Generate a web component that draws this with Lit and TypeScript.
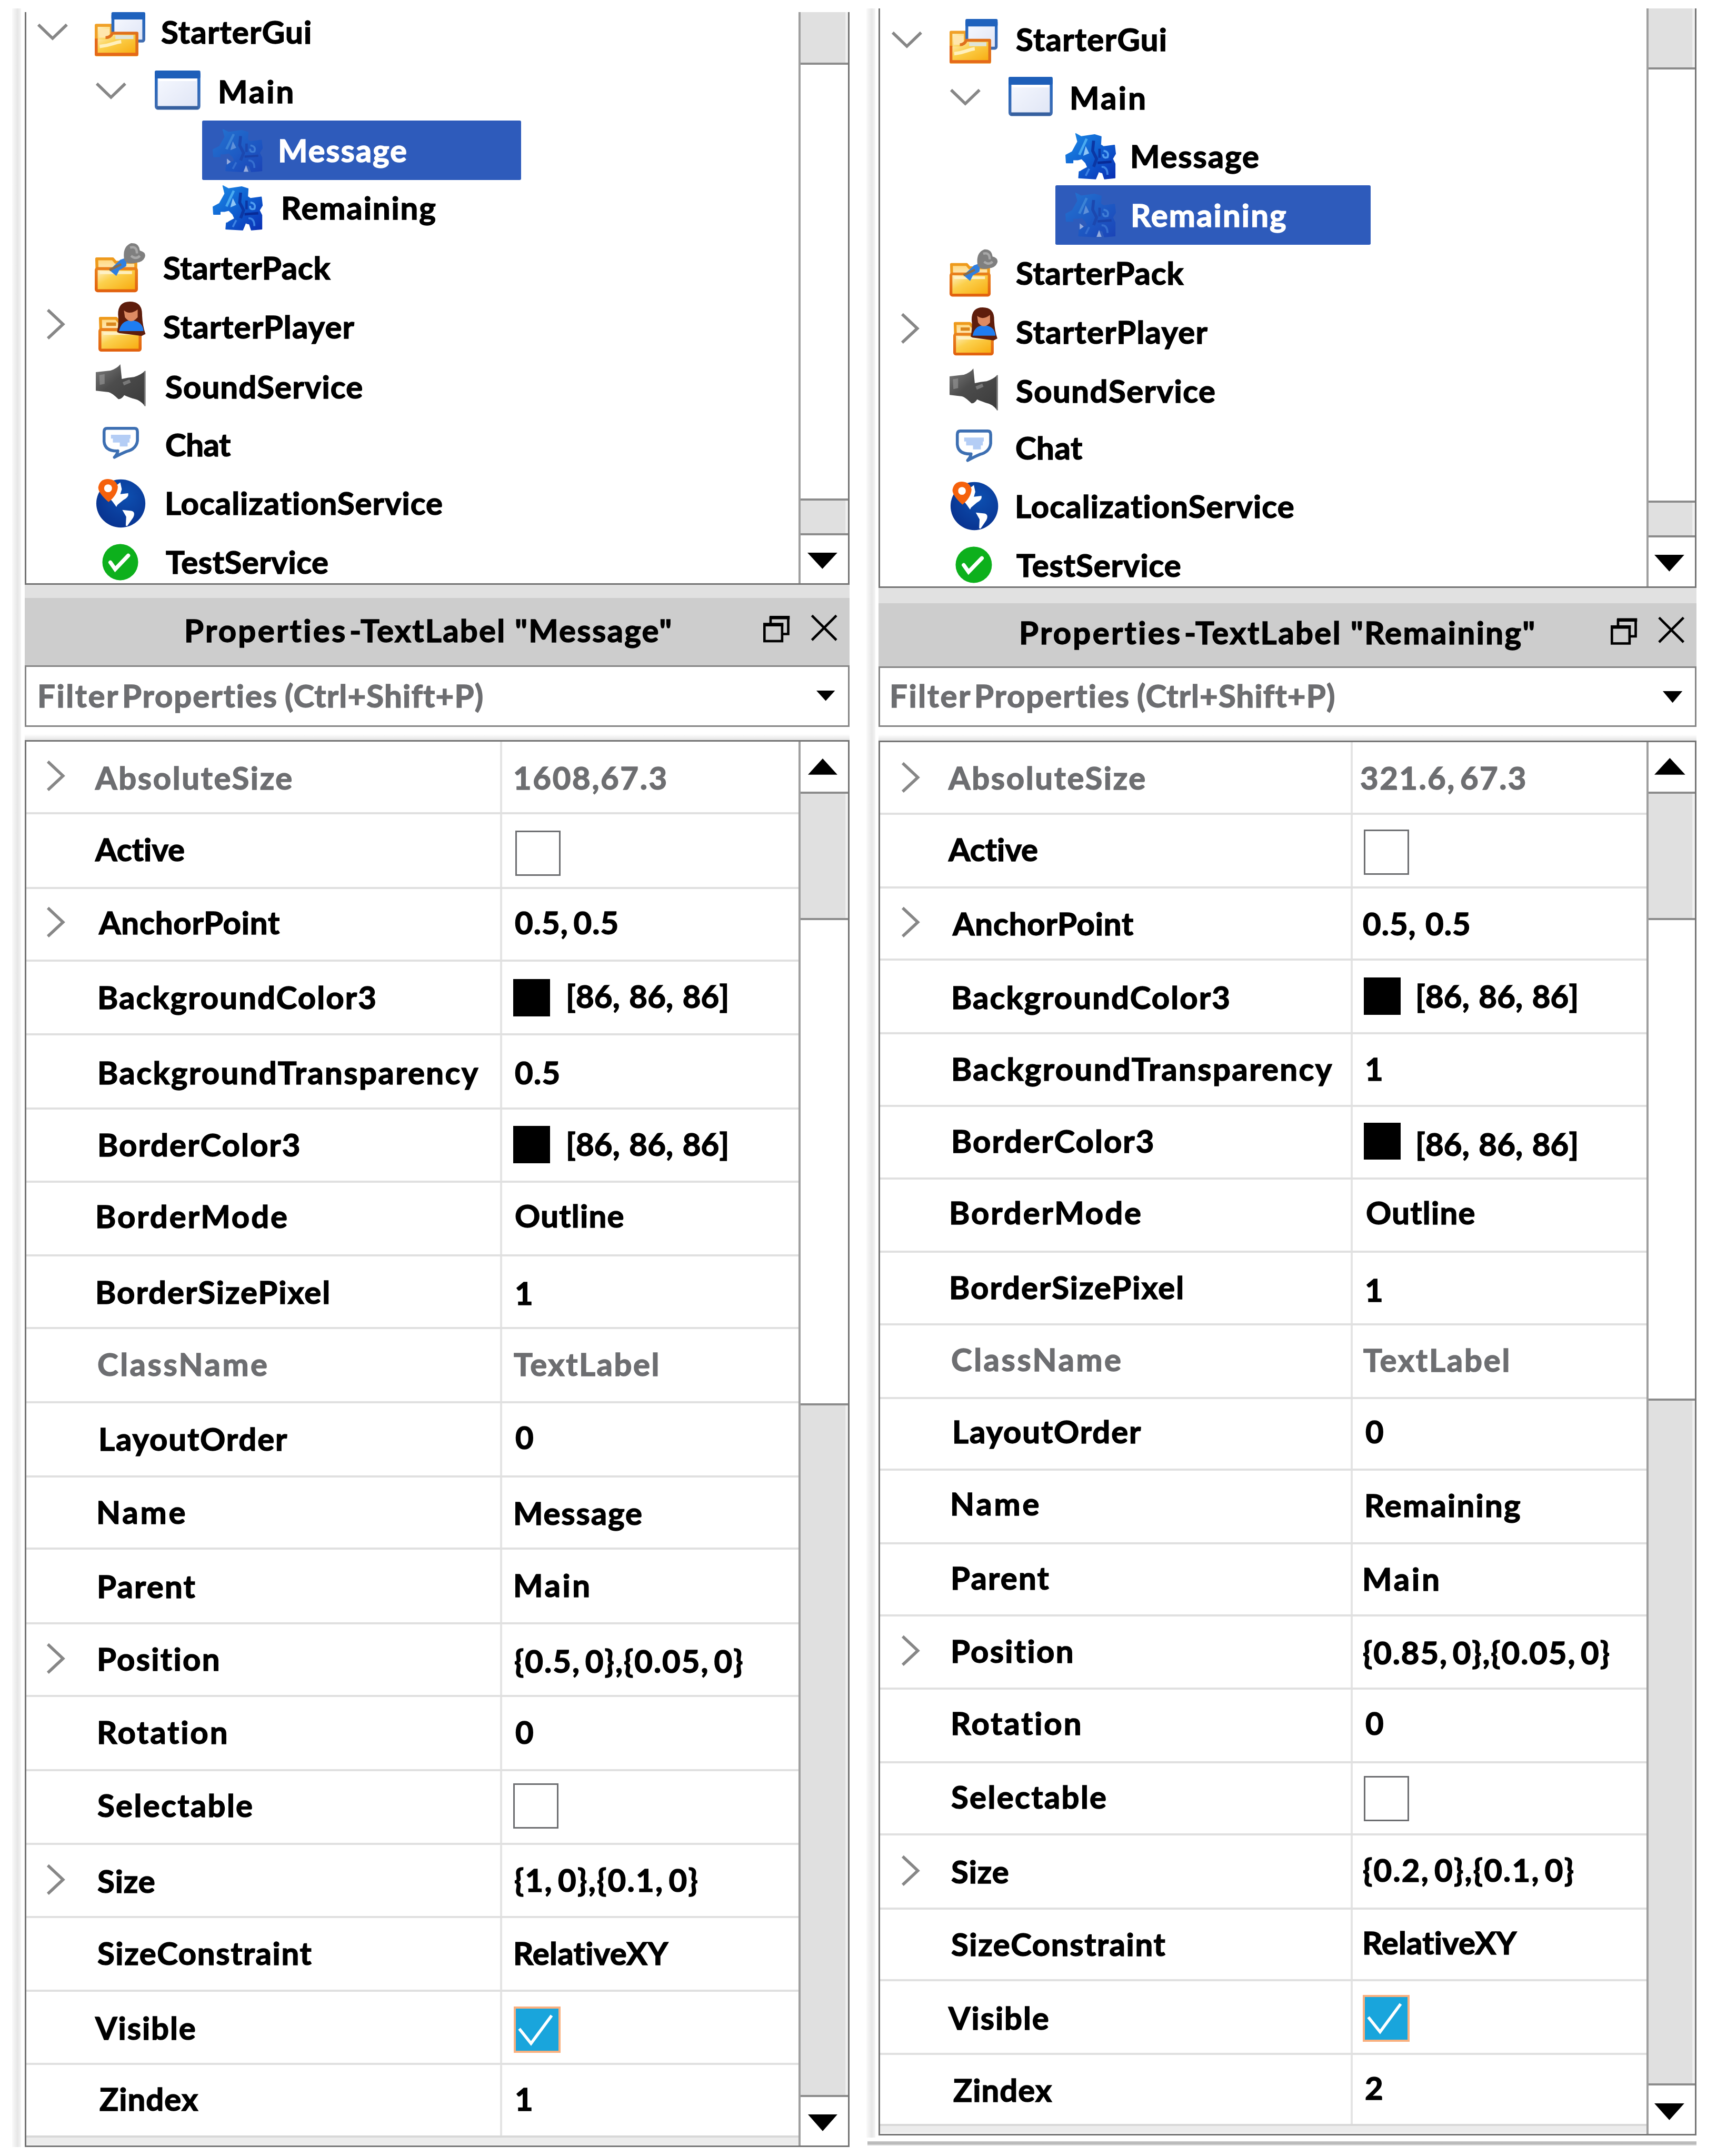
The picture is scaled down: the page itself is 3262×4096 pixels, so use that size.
import { LitElement, html, css, svg, nothing, TemplateResult } from "lit";
import { customElement, property } from "lit/decorators.js";
import { styleMap } from "lit/directives/style-map.js";
import { classMap } from "lit/directives/class-map.js";

const FONT_SIZE = 63;
const LINE = 80;
const BASELINE = 62.5;
const GLYPH_SCALE = 1.02;
const FONT_STACK = 'Lato, "Open Sans", "Liberation Sans", sans-serif';

const ctx = document.createElement("canvas").getContext("2d")!;

/** Text whose ink spans exactly `w` units, starting at its own left edge. */
function fitted(text: string, w: number, wordGap = 0) {
  ctx.font = `bold ${FONT_SIZE}px ${FONT_STACK}`;
  const m = ctx.measureText(text);
  const left = -m.actualBoundingBoxLeft;
  const ink = m.actualBoundingBoxRight - left;
  const spaces = text.split(" ").length - 1;
  const gaps = text.length - 1;
  const spacing = gaps > 0 ? (w / GLYPH_SCALE - ink - spaces * wordGap) / gaps : 0;
  return html`<span class="fit" style=${styleMap({ width: `${w}px` })}
    ><span
      class="glyphs"
      style=${styleMap({
        letterSpacing: `${spacing.toFixed(3)}px`,
        wordSpacing: `${wordGap}px`,
        marginLeft: `${(1.5 - left * GLYPH_SCALE).toFixed(2)}px`,
      })}
      >${text}</span
    ></span
  >`;
}

const shared = css`
  * {
    box-sizing: border-box;
  }
  .fit {
    display: block;
    height: ${LINE}px;
    flex: none;
    white-space: pre;
  }
  .glyphs {
    display: inline-block;
    line-height: ${LINE}px;
    transform: scaleX(${GLYPH_SCALE});
    transform-origin: 0 0;
    font-kerning: normal;
    font-variant-ligatures: none;
    -webkit-text-stroke: 1.6px currentColor;
  }
  svg {
    display: block;
    flex: none;
    overflow: visible;
  }
`;

/* ---------- icons ---------- */

type IconName = "gui" | "window" | "label" | "pack" | "player" | "sound" | "chat" | "globe" | "test";

const folder = (x: number, y: number, w: number, h: number) => svg`
  <path d="M${x + 4} ${y + 3} h${w * 0.38} l6 7 h${w * 0.5 - 2} v${h - 14} h${-(w - 8)} z"
    fill="url(#paper)" stroke="#ee9a1c" stroke-width="6" stroke-linejoin="round"/>`;
const flap = (x: number, y: number, w: number, h: number) => svg`
  <rect x=${x + 3} y=${y + 3} width=${w - 6} height=${h - 6} rx="3" fill="url(#flap)" stroke="url(#rim)" stroke-width="6"/>
  <path d="M${x + 10} ${y + 11} h${w - 22}" stroke="#fff4cf" stroke-width="6" opacity=".85"/>`;

const defs = svg`<defs>
  <linearGradient id="paper" x1="0" y1="0" x2="0" y2="1"><stop offset="0" stop-color="#ffd77c"/><stop offset=".5" stop-color="#fff0cd"/><stop offset="1" stop-color="#f6bd2c"/></linearGradient>
  <linearGradient id="flap" x1="0" y1="0" x2="1" y2="1"><stop offset="0" stop-color="#fff3cf"/><stop offset=".4" stop-color="#fbd04c"/><stop offset="1" stop-color="#f7a90c"/></linearGradient>
  <linearGradient id="rim" x1="0" y1="0" x2="0" y2="1"><stop offset="0" stop-color="#e9801b"/><stop offset="1" stop-color="#e2620f"/></linearGradient>
  <linearGradient id="pane" x1="0" y1="0" x2="1" y2="1"><stop offset="0" stop-color="#f7f9ff"/><stop offset="1" stop-color="#dfe5f5"/></linearGradient>
  <linearGradient id="frame" x1="0" y1="0" x2="0" y2="1"><stop offset="0" stop-color="#1f66c4"/><stop offset="1" stop-color="#3f6cb0"/></linearGradient>
  <linearGradient id="ink" x1="0" y1="0" x2="1" y2="1"><stop offset="0" stop-color="#1c8be6"/><stop offset=".5" stop-color="#0f5fd0"/><stop offset="1" stop-color="#0a2fb4"/></linearGradient>
  <linearGradient id="metal" x1="0" y1="0" x2="1" y2="1"><stop offset="0" stop-color="#7d7d7d"/><stop offset=".4" stop-color="#4c4c4c"/><stop offset="1" stop-color="#3a3a3a"/></linearGradient>
  <radialGradient id="earth" cx=".6" cy=".35" r=".7"><stop offset="0" stop-color="#0d4fb0"/><stop offset="1" stop-color="#08328f"/></radialGradient>
</defs>`;

const art: Record<IconName, { box: string; body: TemplateResult }> = {
  gui: {
    box: "0 0 103 90",
    body: svg`<path d="M3 27 H34 V42 H86 V87 H3 Z" fill="url(#flap)" stroke="#f0a128" stroke-width="6" stroke-linejoin="round"/>
      <path d="M9 34 H30 V52 H9Z" fill="#ffe6ad"/>
      <rect x="37" y="4" width="63" height="55" rx="3" fill="url(#pane)" stroke="url(#frame)" stroke-width="6"/>
      <rect x="34" y="0" width="69" height="15" rx="3" fill="#1f62bd"/>
      <path d="M3 56 L20 56 Q30 56 36 44 H86 V87 H3 Z" fill="url(#flap)"/>
      <path d="M22 52 Q32 52 36 43 H86 V86" fill="none" stroke="#e0701c" stroke-width="6" stroke-linejoin="round"/>
      <path d="M3 54 V86 H88" fill="none" stroke="#e5691a" stroke-width="6" stroke-linejoin="round"/>
      <path d="M42 51 H79" stroke="#dfe4d8" stroke-width="8"/>
      <path d="M10 70 C34 68 38 62 54 60" stroke="#fff0bd" stroke-width="7" fill="none"/>`,
  },
  window: {
    box: "0 0 93 80",
    body: svg`<rect x="3" y="3" width="87" height="74" rx="4" fill="url(#pane)" stroke="url(#frame)" stroke-width="6"/>
      <rect x="0" y="0" width="93" height="16" rx="3" fill="#1e5fb9"/>
      <path d="M8 19 H85" stroke="#fff" stroke-width="5"/>
      <path d="M5 76 H88" stroke="#36609f" stroke-width="7"/>`,
  },
  label: {
    box: "0 0 100 90",
    body: svg`<path d="M20 0 L31 6 L58 2 L71 6 L70 22 L76 26 L98 23 L100 40 L94 50 L99 60 V88 L78 90 L74 78 L66 76 L60 90 L26 88 L27 76 L44 67 L40 58 L32 50 L24 52 L14 52 L14 58 L1 58 L0 43 L13 36 L24 16 Z"
        fill="url(#ink)" stroke="url(#ink)" stroke-width="2" stroke-linejoin="round"/>
      <path d="M42 10 L27 42" stroke="#49aaf0" stroke-width="5"/>
      <path d="M40 25 l7 14 -12 5z" fill="#8fc6f6"/>
      <path d="M56 14 L54 34 L62 50 L56 66" stroke="#0b37a4" stroke-width="6" fill="none"/>
      <path d="M68 30 V48" stroke="#0b37a4" stroke-width="5"/>
      <path d="M76 34 q12 2 8 13 q-9 3 -9 -6" stroke="#4f9df0" stroke-width="4" fill="none"/>
      <path d="M40 84 l7 -14 M72 66 q12 0 12 16" stroke="#3c82e4" stroke-width="4" fill="none"/>
      <path d="M64 58 L92 56" stroke="#082a96" stroke-width="5"/>
      <path d="M28 62 l8 7 -8 6z M62 90 l5 -14 5 14z" fill="#fff"/>`,
  },
  pack: {
    box: "0 0 103 101",
    body: svg`${folder(0, 30, 86, 66)}${flap(0, 50, 88, 51)}
      <path d="M30 56 L52 35 L66 30 L64 48 L50 56 L44 68 Z" fill="#2f7fe0"/>
      <path d="M30 56 L54 44" stroke="#8a6d4a" stroke-width="5"/>
      <path d="M60 34 Q56 8 74 1 Q90 0 92 16 Q106 20 102 30 Q98 40 84 41 Q66 46 60 34Z" fill="#7f7f7f"/>
      <path d="M72 10 q14 -4 14 12 M74 27 q10 8 18 0" fill="none" stroke="#a8a8a8" stroke-width="5"/>`,
  },
  player: {
    box: "0 0 96 102",
    body: svg`${folder(0, 31, 84, 66)}${flap(0, 54, 88, 48)}
      <path d="M38 62 Q42 44 40 26 Q40 0 64 0 Q90 0 89 28 Q90 50 96 66 L88 70 L42 64Z" fill="#5e1d0c"/>
      <path d="M42 60 Q46 40 64 38 Q90 38 92 60 Z" fill="#1f7df0"/>
      <path d="M52 18 Q64 28 80 16 L80 32 Q66 48 54 32Z" fill="#dd8a62"/>
      <path d="M16 46 H36" stroke="#d9861c" stroke-width="7"/>`,
  },
  sound: {
    box: "0 0 101 86",
    body: svg`<path d="M0 16 L30 13 Q44 8 50 0 L53 30 Q64 27 78 26 Q92 22 101 13 V86 Q90 72 76 70 Q64 66 58 63 Q52 72 46 71 Q32 58 26 57 L0 54 Z" fill="url(#metal)"/>
      <path d="M7 22 L18 20 V40 L8 42Z" fill="#9a9a9a" opacity=".6"/>
      <path d="M56 40 L70 34" stroke="#8d8d8d" stroke-width="7" opacity=".7"/>
      <path d="M100 14 V85" stroke="#777" stroke-width="3"/>`,
  },
  chat: {
    box: "0 0 75 65",
    body: svg`<path d="M10 3 H66 Q72 3 72 10 V28 Q70 45 50 50 Q40 54 25 62 Q32 54 32 49 Q6 50 4 30 V10 Q4 3 10 3Z" fill="#fff" stroke="#3d6fb2" stroke-width="6" stroke-linejoin="round"/>
      <path d="M18 20 H58 M22 28 H56 M36 36 H52" stroke="#b4cdf5" stroke-width="8"/>`,
  },
  globe: {
    box: "0 0 101 100",
    body: svg`<ellipse cx="51" cy="51" rx="50" ry="49" fill="url(#earth)"/>
      <path d="M42 14 L50 8 L53 22 L50 32 L66 30 Q68 38 56 44 L44 54 L42 58 L34 47 L28 40 Z" fill="#fff"/>
      <path d="M54 64 L72 66 Q82 68 76 80 L64 97 L61 96 L62 78 Z" fill="#fff"/>
      <path d="M26 48 Q5 30 5 18 Q8 1 25 1 Q42 2 45 17 Q44 34 26 48Z" fill="#f5610c"/>
      <circle cx="25" cy="20" r="8" fill="#fff"/>`,
  },
  test: {
    box: "0 0 75 75",
    body: svg`<circle cx="37.500" cy="37.500" r="37" fill="#0db01c"/>
      <path d="M17 38 L27 52 L54 24" fill="none" stroke="#fff" stroke-width="8" stroke-linecap="round"/>`,
  },
};

type Box = [x: number, y: number, w: number, h: number];

const icon = (name: IconName, w: number, h: number) =>
  html`<svg viewBox=${art[name].box} width=${w} height=${h} preserveAspectRatio="none">${defs}${art[name].body}</svg>`;

const chevron = (down: boolean) =>
  down
    ? html`<svg viewBox="0 0 62 34" width="62" height="34"><path d="M2 2 L31 30 L60 2" fill="none" stroke="#878787" stroke-width="6"/></svg>`
    : html`<svg viewBox="0 0 36 62" width="36" height="62"><path d="M2 2 L33 31 L2 60" fill="none" stroke="#878787" stroke-width="6"/></svg>`;

const triangle = (up: boolean, w: number, h: number) =>
  html`<svg viewBox="0 0 10 10" width=${w} height=${h} preserveAspectRatio="none"><path d=${up ? "M0 10 H10 L5 0Z" : "M0 0 H10 L5 10Z"} fill="#000"/></svg>`;

/* ---------- data ---------- */

interface TreeRow {
  base: number;
  text: string;
  x: number;
  w: number;
  icon: [IconName, ...Box];
  chev?: [x: number, y: number, down: boolean];
  selected?: [x: number, w: number];
}

type Cell = { text: string; x: number; w: number; base: number; gap?: number };
type Value =
  | { kind: "text"; cell: Cell }
  | { kind: "color"; swatch: Box; cell: Cell }
  | { kind: "check"; box: Box; on: boolean };

interface PropRow {
  end: number;
  label: Cell;
  value: Value;
  chevY?: number;
  dim?: boolean;
}

interface Segment {
  end: number;
  fill: "track" | "thumb";
  arrow?: { up: boolean; box: Box };
}

interface PanelData {
  left: number;
  right: number;
  top: number;
  treeEnd: number;
  headTop: number;
  headEnd: number;
  filterEnd: number;
  tableTop: number;
  tableEnd: number;
  divider: number;
  bar: number;
  title: Cell[];
  filter: Cell[];
  restore: Box;
  close: Box;
  caret: Box;
  chevX: number;
  tree: TreeRow[];
  treeBar: Segment[];
  props: PropRow[];
  tableBar: Segment[];
}

const labelSpans: [string, number, number][] = [
  ["AbsoluteSize", 192, 401],
  ["Active", 192, 183],
  ["AnchorPoint", 200, 370],
  ["BackgroundColor3", 203, 561],
  ["BackgroundTransparency", 203, 772],
  ["BorderColor3", 203, 406],
  ["BorderMode", 199, 385],
  ["BorderSizePixel", 199, 470],
  ["ClassName", 200, 343],
  ["LayoutOrder", 205, 380],
  ["Name", 201, 175],
  ["Parent", 202, 196],
  ["Position", 202, 243],
  ["Rotation", 202, 259],
  ["Selectable", 199, 314],
  ["Size", 199, 115],
  ["SizeConstraint", 199, 436],
  ["Visible", 192, 204],
  ["Zindex", 203, 200],
];

const t = (text: string, x: number, w: number, base: number, gap = 0): Value => ({ kind: "text", cell: { text, x, w, base, gap } });
const color = (swatch: Box, x: number, base: number): Value => ({
  kind: "color",
  swatch,
  cell: { text: "[86, 86, 86]", x, w: 323, base, gap: 3 },
});
const check = (box: Box, on = false): Value => ({ kind: "check", box, on });

function rows(shift: number, ends: number[], bases: number[], chevs: Record<number, number>, values: Value[]): PropRow[] {
  return labelSpans.map(([text, x, w], i) => ({
    end: ends[i] + 1.5,
    label: { text, x: x + shift, w, base: bases[i] },
    value: values[i],
    chevY: chevs[i],
    dim: text === "AbsoluteSize" || text === "ClassName",
  }));
}

const leftPanel: PanelData = {
  left: 50, right: 1732, top: 25, treeEnd: 1192, headTop: 1219, headEnd: 1356, filterEnd: 1482,
  tableTop: 1509, tableEnd: 4377, divider: 1021, bar: 1627,
  title: [
    { text: "Properties", x: 379, w: 323, base: 1308 },
    { text: '-TextLabel "Message"', x: 714, w: 651, base: 1308, gap: 0 },
  ],
  filter: [
    { text: "Filter", x: 81, w: 160, base: 1442 },
    { text: "Properties", x: 253, w: 310, base: 1442 },
    { text: "(Ctrl+Shift+P)", x: 582, w: 399, base: 1442 },
  ],
  restore: [1556, 1255, 54, 54], close: [1654, 1253, 53, 53], caret: [1665, 1409, 38, 21],
  chevX: 96,
  tree: [
    { base: 88, text: "StarterGui", x: 329, w: 303, icon: ["gui", 194, 25, 103, 90], chev: [77, 48, true] },
    { base: 209, text: "Main", x: 449, w: 146, icon: ["window", 316, 144, 93, 80], chev: [196, 169, true] },
    { base: 329, text: "Message", x: 571, w: 256, icon: ["label", 435, 263, 100, 86], selected: [413, 650] },
    { base: 447, text: "Remaining", x: 577, w: 310, icon: ["label", 435, 379, 100, 90] },
    { base: 569, text: "StarterPack", x: 333, w: 340, icon: ["pack", 194, 495, 103, 101] },
    { base: 689, text: "StarterPlayer", x: 333, w: 389, icon: ["player", 201, 615, 96, 102], chev: [96, 630, false] },
    { base: 811, text: "SoundService", x: 337, w: 400, icon: ["sound", 196, 743, 101, 86] },
    { base: 929, text: "Chat", x: 338, w: 132, icon: ["chat", 209, 870, 75, 65] },
    { base: 1049, text: "LocalizationService", x: 340, w: 561, icon: ["globe", 196, 975, 101, 100] },
    { base: 1169, text: "TestService", x: 337, w: 330, icon: ["test", 209, 1108, 74, 75] },
  ],
  treeBar: [
    { end: 132, fill: "thumb" },
    { end: 1020, fill: "track" },
    { end: 1091, fill: "thumb" },
    { end: 1188, fill: "track", arrow: { up: false, box: [1646, 1127, 61, 33] } },
  ],
  props: rows(
    0,
    [1659, 1812, 1960, 2110, 2261, 2410, 2561, 2709, 2860, 3011, 3158, 3311, 3459, 3610, 3760, 3909, 4060, 4209, 4357],
    [1609, 1755, 1905, 2057, 2210, 2357, 2503, 2658, 2805, 2957, 3106, 3258, 3406, 3555, 3704, 3858, 4006, 4158, 4303],
    { 0: 1551, 2: 1850, 12: 3351, 15: 3801 },
    [
      t("1608,67.3", 1049, 307, 1609),
      check([1051, 1693, 92, 92]),
      t("0.5, 0.5", 1050, 208, 1905, -6),
      color([1047, 1996, 75, 76], 1158, 2055),
      t("0.5", 1050, 89, 2210),
      color([1047, 2295, 75, 76], 1158, 2356),
      t("Outline", 1051, 219, 2502),
      t("1", 1053, 30, 2660),
      t("TextLabel", 1047, 293, 2805),
      t("0", 1051, 33, 2954),
      t("Message", 1051, 256, 3108),
      t("Main", 1051, 148, 3256),
      t("{0.5, 0},{0.05, 0}", 1049, 464, 3410, -8),
      t("0", 1051, 33, 3555),
      check([1047, 3635, 92, 92]),
      t("{1, 0},{0.1, 0}", 1049, 372, 3856, -8),
      t("RelativeXY", 1051, 313, 4006),
      check([1048, 4090, 95, 95], true),
      t("1", 1053, 30, 4303),
    ],
  ),
  tableBar: [
    { end: 1619, fill: "track", arrow: { up: true, box: [1647, 1547, 60, 33] } },
    { end: 1876, fill: "thumb" },
    { end: 2866, fill: "track" },
    { end: 4276, fill: "thumb" },
    { end: 4373, fill: "track", arrow: { up: false, box: [1647, 4311, 60, 34] } },
  ],
};

const rightPanel: PanelData = {
  left: 1791, right: 3458, top: 17, treeEnd: 1198, headTop: 1230, headEnd: 1358, filterEnd: 1482,
  tableTop: 1510, tableEnd: 4353, divider: 2755, bar: 3355,
  title: [
    { text: "Properties", x: 2081, w: 323, base: 1312 },
    { text: '-TextLabel "Remaining"', x: 2416, w: 709, base: 1312, gap: 0 },
  ],
  filter: [
    { text: "Filter", x: 1818, w: 160, base: 1442 },
    { text: "Properties", x: 1990, w: 310, base: 1442 },
    { text: "(Ctrl+Shift+P)", x: 2319, w: 398, base: 1442 },
  ],
  restore: [3283, 1260, 54, 55], close: [3380, 1258, 54, 53], caret: [3390, 1410, 40, 24],
  chevX: 1839,
  tree: [
    { base: 103, text: "StarterGui", x: 2071, w: 304, icon: ["gui", 1936, 39, 98, 91], chev: [1818, 64, true] },
    { base: 222, text: "Main", x: 2185, w: 147, icon: ["window", 2057, 157, 90, 80], chev: [1938, 181, true] },
    { base: 341, text: "Message", x: 2308, w: 256, icon: ["label", 2174, 273, 101, 92] },
    { base: 461, text: "Remaining", x: 2309, w: 312, icon: ["label", 2174, 393, 101, 89], selected: [2152, 643] },
    { base: 580, text: "StarterPack", x: 2071, w: 341, icon: ["pack", 1936, 508, 98, 97] },
    { base: 700, text: "StarterPlayer", x: 2071, w: 390, icon: ["player", 1944, 627, 90, 98], chev: [1838, 638, false] },
    { base: 820, text: "SoundService", x: 2071, w: 404, icon: ["sound", 1936, 751, 98, 86] },
    { base: 936, text: "Chat", x: 2071, w: 135, icon: ["chat", 1948, 876, 75, 66] },
    { base: 1055, text: "LocalizationService", x: 2073, w: 564, icon: ["globe", 1937, 981, 98, 100] },
    { base: 1175, text: "TestService", x: 2071, w: 334, icon: ["test", 1948, 1114, 75, 75] },
  ],
  treeBar: [
    { end: 142, fill: "thumb" },
    { end: 1025, fill: "track" },
    { end: 1095, fill: "thumb" },
    { end: 1194, fill: "track", arrow: { up: false, box: [3372, 1131, 61, 34] } },
  ],
  props: rows(
    1740,
    [1660, 1811, 1957, 2108, 2256, 2404, 2553, 2701, 2851, 2997, 3148, 3295, 3444, 3594, 3741, 3892, 4038, 4188, 4333],
    [1609, 1755, 1907, 2057, 2203, 2350, 2496, 2648, 2795, 2942, 3089, 3241, 3390, 3537, 3687, 3839, 3987, 4138, 4284],
    { 0: 1554, 2: 1850, 12: 3335, 15: 3783 },
    [
      t("321.6, 67.3", 2774, 334, 1609, -9),
      check([2781, 1691, 92, 92]),
      t("0.5, 0.5", 2778, 216, 1907, 2),
      color([2781, 1992, 75, 76], 2890, 2055),
      t("1", 2786, 29, 2203),
      color([2781, 2288, 75, 76], 2890, 2356),
      t("Outline", 2786, 219, 2496),
      t("1", 2786, 29, 2654),
      t("TextLabel", 2778, 295, 2796),
      t("0", 2784, 33, 2942),
      t("Remaining", 2786, 313, 3092),
      t("Main", 2781, 149, 3243),
      t("{0.85, 0},{0.05, 0}", 2778, 501, 3393, -8),
      t("0", 2784, 33, 3537),
      check([2781, 3620, 92, 92]),
      t("{0.2, 0},{0.1, 0}", 2778, 428, 3836, -8),
      t("RelativeXY", 2781, 312, 3984),
      check([2779, 4067, 95, 95], true),
      t("2", 2784, 32, 4280),
    ],
  ),
  tableBar: [
    { end: 1619, fill: "track", arrow: { up: true, box: [3372, 1546, 63, 34] } },
    { end: 1876, fill: "thumb" },
    { end: 2856, fill: "track" },
    { end: 4252, fill: "thumb" },
    { end: 4349, fill: "track", arrow: { up: false, box: [3372, 4288, 61, 34] } },
  ],
};

/* ---------- elements ---------- */

@customElement("scroll-bar")
export class ScrollBar extends LitElement {
  static styles = [
    shared,
    css`
      :host {
        display: flex;
        flex-direction: column;
        flex: none;
        border-left: 5px solid #9f9f9f;
      }
      .segment {
        flex: none;
        border-bottom: 5px solid #8c8c8c;
      }
      .segment:last-child {
        border-bottom: 0;
      }
      .thumb {
        background: #e0e0e0;
        box-shadow: inset -5px 0 0 #f1f1f1;
      }
    `,
  ];
  @property({ attribute: false }) segments: Segment[] = [];
  @property({ type: Number }) start = 0;
  @property({ type: Number }) left = 0;

  render() {
    let y = this.start;
    return this.segments.map((s) => {
      const top = y;
      y = s.end;
      const a = s.arrow;
      return html`<div class="segment ${s.fill}" style=${styleMap({ height: `${s.end - top}px` })}>
        ${a
          ? html`<div style=${styleMap({ padding: `${a.box[1] - top}px 0 0 ${a.box[0] - this.left - 5}px` })}>
              ${triangle(a.up, a.box[2], a.box[3])}
            </div>`
          : nothing}
      </div>`;
    });
  }
}

@customElement("studio-panel")
export class StudioPanel extends LitElement {
  static styles = [
    shared,
    css`
      :host {
        display: flex;
        flex-direction: column;
        flex: none;
        color: #000;
      }
      .tree,
      .table {
        display: flex;
        flex: none;
        overflow: hidden;
        border: 4px solid #747474;
        background: #fff;
      }
      .tree {
        border-top: 0;
      }
      .rows {
        flex: 1;
        min-width: 0;
      }
      .row {
        display: flex;
        align-items: flex-start;
      }
      .picked {
        display: flex;
        align-items: flex-start;
        height: 121px;
        background: #2e5bbb;
        color: #fff;
        border-radius: 3px;
      }
      .picked svg {
        opacity: 0.5;
      }
      .strip {
        flex: none;
        background: #e1e1e1;
      }
      .header {
        display: flex;
        align-items: flex-start;
        flex: none;
        background: #cdcdcd;
      }
      .filter {
        display: flex;
        align-items: flex-start;
        flex: none;
        border: 4px solid #858585;
        background: #fff;
        color: #6d6e71;
      }
      .gap {
        flex: none;
        background: linear-gradient(#fff 55%, #e4e4e4);
      }
      .prop {
        display: flex;
        border-bottom: 5px solid #e0e0e0;
      }
      .prop:nth-last-child(2) {
        border-bottom-color: #d8d8d8;
      }
      .dim {
        color: #6d6e71;
      }
      .name,
      .value {
        display: flex;
        align-items: flex-start;
        flex: none;
        height: 100%;
      }
      .name {
        border-right: 5px solid #e4e4e4;
      }
      .value {
        flex: 1;
      }
      .foot {
        background: #ececec;
      }
      .swatch {
        background: #000;
        flex: none;
      }
      .check {
        flex: none;
        border: 4px solid #6d6e71;
        background: #fff;
      }
      .on {
        border: 5px solid #f9b07f;
        background: #19a5dc;
      }
    `,
  ];
  @property({ attribute: false }) data!: PanelData;

  private at(x: number, y: number) {
    return styleMap({ marginLeft: `${x}px`, marginTop: `${y}px`, flex: "none" });
  }

  private words(cells: Cell[], left: number, top: number) {
    let x = left;
    return cells.map((c) => {
      const from = x;
      x = c.x + c.w;
      return html`<div style=${this.at(c.x - from, c.base - top - BASELINE)}>${fitted(c.text, c.w, c.gap ?? 0)}</div>`;
    });
  }

  private treeRow(r: TreeRow, i: number, start: number) {
    const lead = 84;
    const top = i === 0 ? start : r.base - lead;
    const next = this.data.tree[i + 1];
    const end = next ? next.base - lead : this.data.treeEnd - 4;
    let x = this.data.left + 4;
    const parts: unknown[] = [];
    if (r.chev) {
      parts.push(html`<div style=${this.at(r.chev[0] - x, r.chev[1] - top)}>${chevron(r.chev[2])}</div>`);
      x = r.chev[0] + (r.chev[2] ? 62 : 36);
    }
    const [name, ix, iy, iw, ih] = r.icon;
    const inner = (from: number) => html`
      <div style=${this.at(ix - from, iy - top)}>${icon(name, iw, ih)}</div>
      <div style=${this.at(r.x - ix - iw, r.base - top - BASELINE)}>${fitted(r.text, r.w)}</div>
    `;
    if (r.selected) {
      parts.push(html`<div style=${this.at(r.selected[0] - x, 1)}>
        <div class="picked" style=${styleMap({ width: `${r.selected[1]}px` })}>${inner(r.selected[0])}</div>
      </div>`);
    } else parts.push(inner(x));
    return html`<div class="row" style=${styleMap({ height: `${end - top}px` })}>${parts}</div>`;
  }

  private value(v: Value, top: number, left: number) {
    if (v.kind === "check") {
      const [x, y, w, h] = v.box;
      return html`<div style=${this.at(x - left, y - top + 1)}>
        <div class=${classMap({ check: true, on: v.on })} style=${styleMap({ width: `${w}px`, height: `${h}px` })}>
          ${v.on
            ? html`<svg viewBox="0 0 85 85" width="85" height="85"><path d="M7 41 L31 71 L73 14" fill="none" stroke="#fff" stroke-width="6"/></svg>`
            : nothing}
        </div>
      </div>`;
    }
    const c = v.cell;
    let from = left;
    let swatch: unknown = nothing;
    if (v.kind === "color") {
      const [x, y, w, h] = v.swatch;
      swatch = html`<div style=${this.at(x - left, y - top + 1)}>
        <div class="swatch" style=${styleMap({ width: `${w}px`, height: `${h}px` })}></div>
      </div>`;
      from = x + w;
    }
    return html`${swatch}
      <div style=${this.at(c.x - from, c.base - top - BASELINE)}>${fitted(c.text, c.w, c.gap ?? 0)}</div>`;
  }

  private propRow(p: PropRow, i: number) {
    const d = this.data;
    const top = i === 0 ? d.tableTop + 4 : d.props[i - 1].end;
    let x = d.left + 4;
    let chev: unknown = nothing;
    if (p.chevY !== undefined) {
      chev = html`<div style=${this.at(d.chevX - x, p.chevY - top)}>${chevron(false)}</div>`;
      x = d.chevX + 36;
    }
    const l = p.label;
    return html`<div class=${classMap({ prop: true, dim: !!p.dim })} style=${styleMap({ height: `${p.end - top}px` })}>
      <div class="name" style=${styleMap({ width: `${d.divider + 3 - d.left - 4}px` })}>
        ${chev}
        <div style=${this.at(l.x - x, l.base - top - BASELINE)}>${fitted(l.text, l.w)}</div>
      </div>
      <div class="value">${this.value(p.value, top, d.divider + 3)}</div>
    </div>`;
  }

  render() {
    const d = this.data;
    const barWidth = styleMap({ width: `${d.right - 4 - d.bar}px` });
    const lastEnd = d.props[d.props.length - 1].end;
    const titleLast = d.title[d.title.length - 1];
    const filterLast = d.filter[d.filter.length - 1];
    return html`
      <div class="tree" style=${styleMap({ marginTop: `${d.top}px`, height: `${d.treeEnd - d.top}px` })}>
        <div class="rows">${d.tree.map((r, i) => this.treeRow(r, i, d.top))}</div>
        <scroll-bar style=${barWidth} .segments=${d.treeBar} .start=${d.top} .left=${d.bar}></scroll-bar>
      </div>
      <div class="strip" style=${styleMap({ height: `${d.headTop - d.treeEnd}px` })}></div>
      <div class="header" style=${styleMap({ height: `${d.headEnd - d.headTop}px` })}>
        ${this.words(d.title, d.left, d.headTop)}
        <div style=${this.at(d.restore[0] - titleLast.x - titleLast.w, d.restore[1] - d.headTop)}>
          <svg viewBox="0 0 54 54" width=${d.restore[2]} height=${d.restore[3]}>
            <path d="M15 16 V4 H51 V37 H40" fill="none" stroke="#000" stroke-width="5"/>
            <path d="M13 3.500 H54" stroke="#000" stroke-width="7"/>
            <rect x="2.500" y="17" width="36" height="34.500" fill="none" stroke="#000" stroke-width="5"/>
            <path d="M0 18 H41" stroke="#000" stroke-width="7"/>
          </svg>
        </div>
        <div style=${this.at(d.close[0] - d.restore[0] - d.restore[2], d.close[1] - d.headTop)}>
          <svg viewBox="0 0 53 53" width=${d.close[2]} height=${d.close[3]}>
            <path d="M1.500 1.500 L51.500 51.500 M51.500 1.500 L1.500 51.500" stroke="#000" stroke-width="5"/>
          </svg>
        </div>
      </div>
      <div class="filter" style=${styleMap({ height: `${d.filterEnd - d.headEnd}px` })}>
        ${this.words(d.filter, d.left + 4, d.headEnd + 4)}
        <div style=${this.at(d.caret[0] - filterLast.x - filterLast.w, d.caret[1] - d.headEnd - 4)}>
          ${triangle(false, d.caret[2], d.caret[3])}
        </div>
      </div>
      <div class="gap" style=${styleMap({ height: `${d.tableTop - d.filterEnd}px` })}></div>
      <div class="table" style=${styleMap({ height: `${d.tableEnd - d.tableTop}px` })}>
        <div class="rows">
          ${d.props.map((p, i) => this.propRow(p, i))}
          <div class="foot" style=${styleMap({ height: `${d.tableEnd - 4 - lastEnd}px` })}></div>
        </div>
        <scroll-bar style=${barWidth} .segments=${d.tableBar} .start=${d.tableTop + 4} .left=${d.bar}></scroll-bar>
      </div>
    `;
  }
}

@customElement("app-root")
export class AppRoot extends LitElement {
  static styles = [
    shared,
    css`
      :host {
        display: block;
        width: 3262px;
        height: 4096px;
        overflow: hidden;
        background: #fff;
      }
      .page {
        display: flex;
        align-items: flex-start;
        width: 3500px;
        height: 4395px;
        zoom: 0.932;
        font: bold ${FONT_SIZE}px / ${LINE}px Lato, "Open Sans", "Liberation Sans", sans-serif;
      }
      .gutter {
        flex: none;
        width: 18px;
        margin-top: 17px;
        margin-right: 7px;
        background: linear-gradient(90deg, #fafafa, #e6e6e6 60%, #f4f4f4);
      }
      .first {
        margin-left: 25px;
        height: 4360px;
      }
      .second {
        margin-left: 34px;
        height: 4340px;
      }
      .right {
        flex: none;
      }
      .ledge {
        height: 8px;
        margin: 12px 0 0 -23px;
        background: linear-gradient(#c8c8c8, #b4b4b4, #dedede);
      }
    `,
  ];

  render() {
    const width = (p: PanelData) => styleMap({ width: `${p.right - p.left}px` });
    return html`<div class="page">
      <div class="gutter first"></div>
      <studio-panel style=${width(leftPanel)} .data=${leftPanel}></studio-panel>
      <div class="gutter second"></div>
      <div class="right">
        <studio-panel style=${width(rightPanel)} .data=${rightPanel}></studio-panel>
        <div class="ledge"></div>
      </div>
    </div>`;
  }
}
